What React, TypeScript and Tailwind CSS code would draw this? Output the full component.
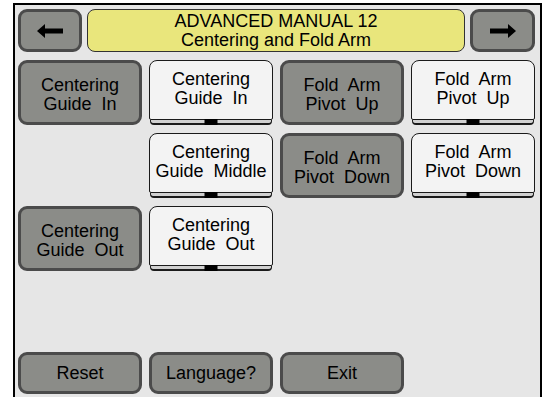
import React from "react";

const font = { fontFamily: '"Liberation Sans", Arial, sans-serif' };

function Arrow({ dir }: { dir: "left" | "right" }) {
  return (
    <svg width="26" height="14" viewBox="0 0 26 14" className={dir === "right" ? "-scale-x-100" : ""}>
      <polygon points="0,7 8,0 8,4.5 26,4.5 26,9.5 8,9.5 8,14" fill="#000" />
    </svg>
  );
}

function DarkButton({ lines, className = "" }: { lines: string[]; className?: string }) {
  return (
    <div
      className={`flex flex-col items-center justify-center rounded-[9px] border-[3px] border-[#4b4b4b] bg-[#8b8c88] text-[18px] leading-[19px] text-black ${className}`}
    >
      {lines.map((l, i) => (
        <span key={i} className="whitespace-pre">
          {l}
        </span>
      ))}
    </div>
  );
}

function WhiteButton({ lines }: { lines: string[] }) {
  return (
    <div className="flex h-[65px] flex-col">
      <div className="flex flex-1 flex-col items-center justify-center rounded-t-[8px] rounded-b-[2px] border border-[#1a1a1a] bg-[#f3f3f3] pb-[3px] text-[18px] leading-[19px] text-black">
        {lines.map((l, i) => (
          <span key={i} className="whitespace-pre">
            {l}
          </span>
        ))}
      </div>
      <div className="relative mx-[1px] h-[5px] rounded-b-[4px] border-x border-b-2 border-[#1a1a1a] bg-[#d0d0d0]">
        <div className="absolute bottom-[-2px] left-1/2 h-[6px] w-[13px] -translate-x-1/2 bg-black" />
      </div>
    </div>
  );
}

export default function App() {
  return (
    <div className="h-[397px] w-[546px] overflow-hidden bg-white" style={font}>
      <div className="ml-[13px] mt-[3px] flex h-[420px] w-[529px] flex-col border-2 border-black bg-[#e6e6e6] pl-[3px] pr-[5px] pt-[4px]">
        <div className="flex h-[43px] gap-[5px]">
          <div className="flex w-[64px] items-center justify-center rounded-[9px] border-[3px] border-[#4b4b4b] bg-[#8b8c88]">
            <Arrow dir="left" />
          </div>
          <div className="flex flex-1 flex-col items-center justify-center rounded-[8px] border border-[#333] bg-[#e9e67c] text-[18px] leading-[19px] text-black">
            <span>ADVANCED MANUAL 12</span>
            <span>Centering and Fold Arm</span>
          </div>
          <div className="flex w-[65px] items-center justify-center rounded-[9px] border-[3px] border-[#4b4b4b] bg-[#8b8c88]">
            <Arrow dir="right" />
          </div>
        </div>

        <div className="mt-[8px] grid grid-cols-[124px_124px_124px_124px] grid-rows-[65px_65px_65px] gap-x-[7px] gap-y-[8px]">
          <DarkButton lines={["Centering", "Guide  In"]} className="pt-[4px]" />
          <WhiteButton lines={["Centering", "Guide  In"]} />
          <DarkButton lines={["Fold  Arm", "Pivot  Up"]} className="pt-[4px]" />
          <WhiteButton lines={["Fold  Arm", "Pivot  Up"]} />

          <div />
          <WhiteButton lines={["Centering", "Guide  Middle"]} />
          <DarkButton lines={["Fold  Arm", "Pivot  Down"]} className="pt-[4px]" />
          <WhiteButton lines={["Fold  Arm", "Pivot  Down"]} />

          <DarkButton lines={["Centering", "Guide  Out"]} className="pt-[4px]" />
          <WhiteButton lines={["Centering", "Guide  Out"]} />
        </div>

        <div className="mt-[81px] grid grid-cols-[124px_124px_124px] gap-x-[7px]">
          <DarkButton lines={["Reset"]} className="h-[42px]" />
          <DarkButton lines={["Language?"]} className="h-[42px]" />
          <DarkButton lines={["Exit"]} className="h-[42px]" />
        </div>
      </div>
    </div>
  );
}
